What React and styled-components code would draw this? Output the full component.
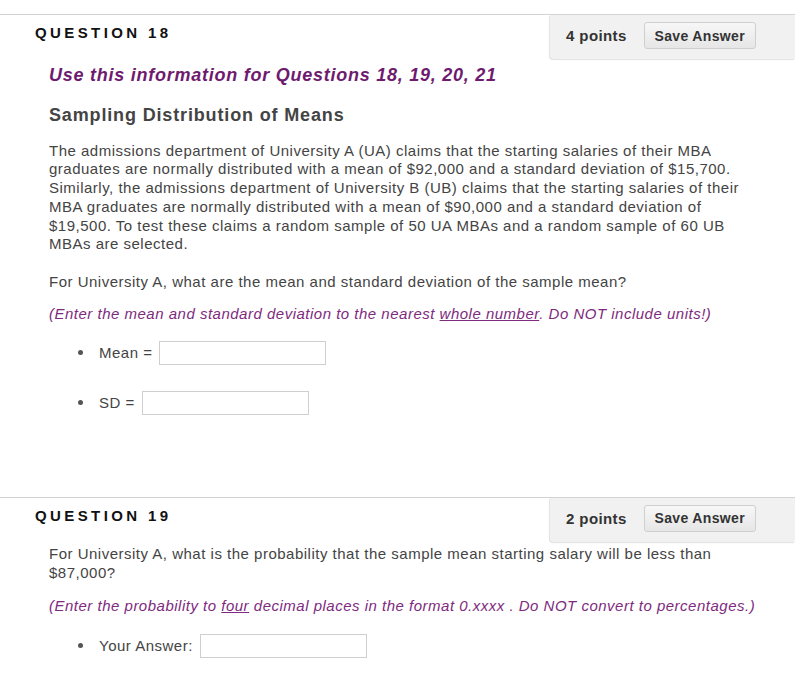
import React from "react";
import styled, { createGlobalStyle } from "styled-components";

const GlobalStyle = createGlobalStyle`
  html, body {
    margin: 0;
    padding: 0;
    background: #ffffff;
  }
  body {
    font-family: "Liberation Sans", Arial, sans-serif;
    color: #444;
  }
`;

const Page = styled.div`
  width: 795px;
  padding-top: 14px;
`;

const Question = styled.section`
  border-top: 1px solid #d3d3d3;
  padding-bottom: ${(p) => p.$bottom || 0}px;
`;

const Header = styled.div`
  display: flex;
  justify-content: space-between;
  align-items: flex-start;
  height: 45px;
`;

const Title = styled.h2`
  margin: 9px 0 0 35px;
  font-size: 15px;
  line-height: 18px;
  font-weight: 700;
  letter-spacing: 3.4px;
  color: #111;
`;

const PointsPanel = styled.div`
  display: flex;
  align-items: center;
  gap: 17px;
  width: 245px;
  height: 44px;
  padding: 0 0 3px 16px;
  box-sizing: border-box;
  background: #f1f1f1;
  border-bottom-left-radius: 4px;
  box-shadow: -1px 1px 1px rgba(0, 0, 0, 0.12);
`;

const Points = styled.span`
  font-size: 15px;
  font-weight: 700;
  letter-spacing: 0.4px;
  color: #333;
`;

const SaveButton = styled.button`
  width: 112px;
  height: 27px;
  padding: 0;
  font-family: "Liberation Sans", Arial, sans-serif;
  font-size: 14px;
  font-weight: 700;
  letter-spacing: 0.35px;
  color: #333;
  background: linear-gradient(#f7f7f7, #e6e6e6);
  border: 1px solid #cfcfcf;
  border-radius: 3px;
  cursor: pointer;
`;

const Body = styled.div`
  padding-left: 49px;
  width: 740px;
`;

const Notice = styled.h3`
  margin: 4px 0 0;
  font-size: 18px;
  line-height: 22px;
  font-style: italic;
  font-weight: 700;
  letter-spacing: 0.75px;
  color: #6e1a6e;
`;

const Subject = styled.h3`
  margin: 18px 0 0;
  font-size: 18px;
  line-height: 22px;
  font-weight: 700;
  letter-spacing: 0.85px;
  color: #444;
`;

const Text = styled.p`
  margin: ${(p) => p.$top}px 0 0;
  font-size: 15px;
  line-height: 18.75px;
  letter-spacing: 0.5px;
  color: #444;
`;

const Hint = styled.p`
  margin: ${(p) => p.$top}px 0 0;
  font-size: 15px;
  line-height: 18.75px;
  font-style: italic;
  letter-spacing: 0.5px;
  color: #7e2a7e;

  u {
    text-decoration-thickness: 1px;
  }
`;

const AnswerList = styled.ul`
  margin: 17.6px 0 0;
  padding-left: 29px;
  list-style: none;
  display: flex;
  flex-direction: column;
  gap: 26px;
`;

const AnswerItem = styled.li`
  display: flex;
  align-items: center;
  height: 24px;
  font-size: 15px;
  letter-spacing: 0.5px;
  color: #444;

  &::before {
    content: "";
    width: 5px;
    height: 5px;
    margin-right: 16px;
    border-radius: 50%;
    background: #555;
  }
`;

const AnswerInput = styled.input`
  box-sizing: border-box;
  width: 167px;
  height: 24px;
  margin-left: 7px;
  border: 1px solid #cfcfcf;
  background: #fff;
`;

function QuestionHeader({ number, points }) {
  return (
    <Header>
      <Title>QUESTION {number}</Title>
      <PointsPanel>
        <Points>{points} points</Points>
        <SaveButton>Save Answer</SaveButton>
      </PointsPanel>
    </Header>
  );
}

export default function App() {
  return (
    <Page>
      <GlobalStyle />
      <Question $bottom={82}>
        <QuestionHeader number={18} points={4} />
        <Body>
          <Notice>Use this information for Questions 18, 19, 20, 21</Notice>
          <Subject>Sampling Distribution of Means</Subject>
          <Text $top={15.6}>
            The admissions department of University A (UA) claims that the
            starting salaries of their MBA
            <br />
            graduates are normally distributed with a mean of $92,000 and a
            standard deviation of $15,700.
            <br />
            Similarly, the admissions department of University B (UB) claims
            that the starting salaries of their
            <br />
            MBA graduates are normally distributed with a mean of $90,000 and a
            standard deviation of
            <br />
            $19,500. To test these claims a random sample of 50 UA MBAs and a
            random sample of 60 UB
            <br />
            MBAs are selected.
          </Text>
          <Text $top={18.5}>
            For University A, what are the mean and standard deviation of the
            sample mean?
          </Text>
          <Hint $top={13.2}>
            (Enter the mean and standard deviation to the nearest{" "}
            <u>whole number</u>. Do NOT include units!)
          </Hint>
          <AnswerList>
            <AnswerItem>
              Mean =<AnswerInput type="text" />
            </AnswerItem>
            <AnswerItem>
              SD =<AnswerInput type="text" />
            </AnswerItem>
          </AnswerList>
        </Body>
      </Question>
      <Question>
        <QuestionHeader number={19} points={2} />
        <Body>
          <Text $top={2}>
            For University A, what is the probability that the sample mean
            starting salary will be less than
            <br />
            $87,000?
          </Text>
          <Hint $top={15}>
            (Enter the probability to <u>four</u> decimal places in the format
            0.xxxx . Do NOT convert to percentages.)
          </Hint>
          <AnswerList>
            <AnswerItem>
              Your Answer:<AnswerInput type="text" />
            </AnswerItem>
          </AnswerList>
        </Body>
      </Question>
    </Page>
  );
}
